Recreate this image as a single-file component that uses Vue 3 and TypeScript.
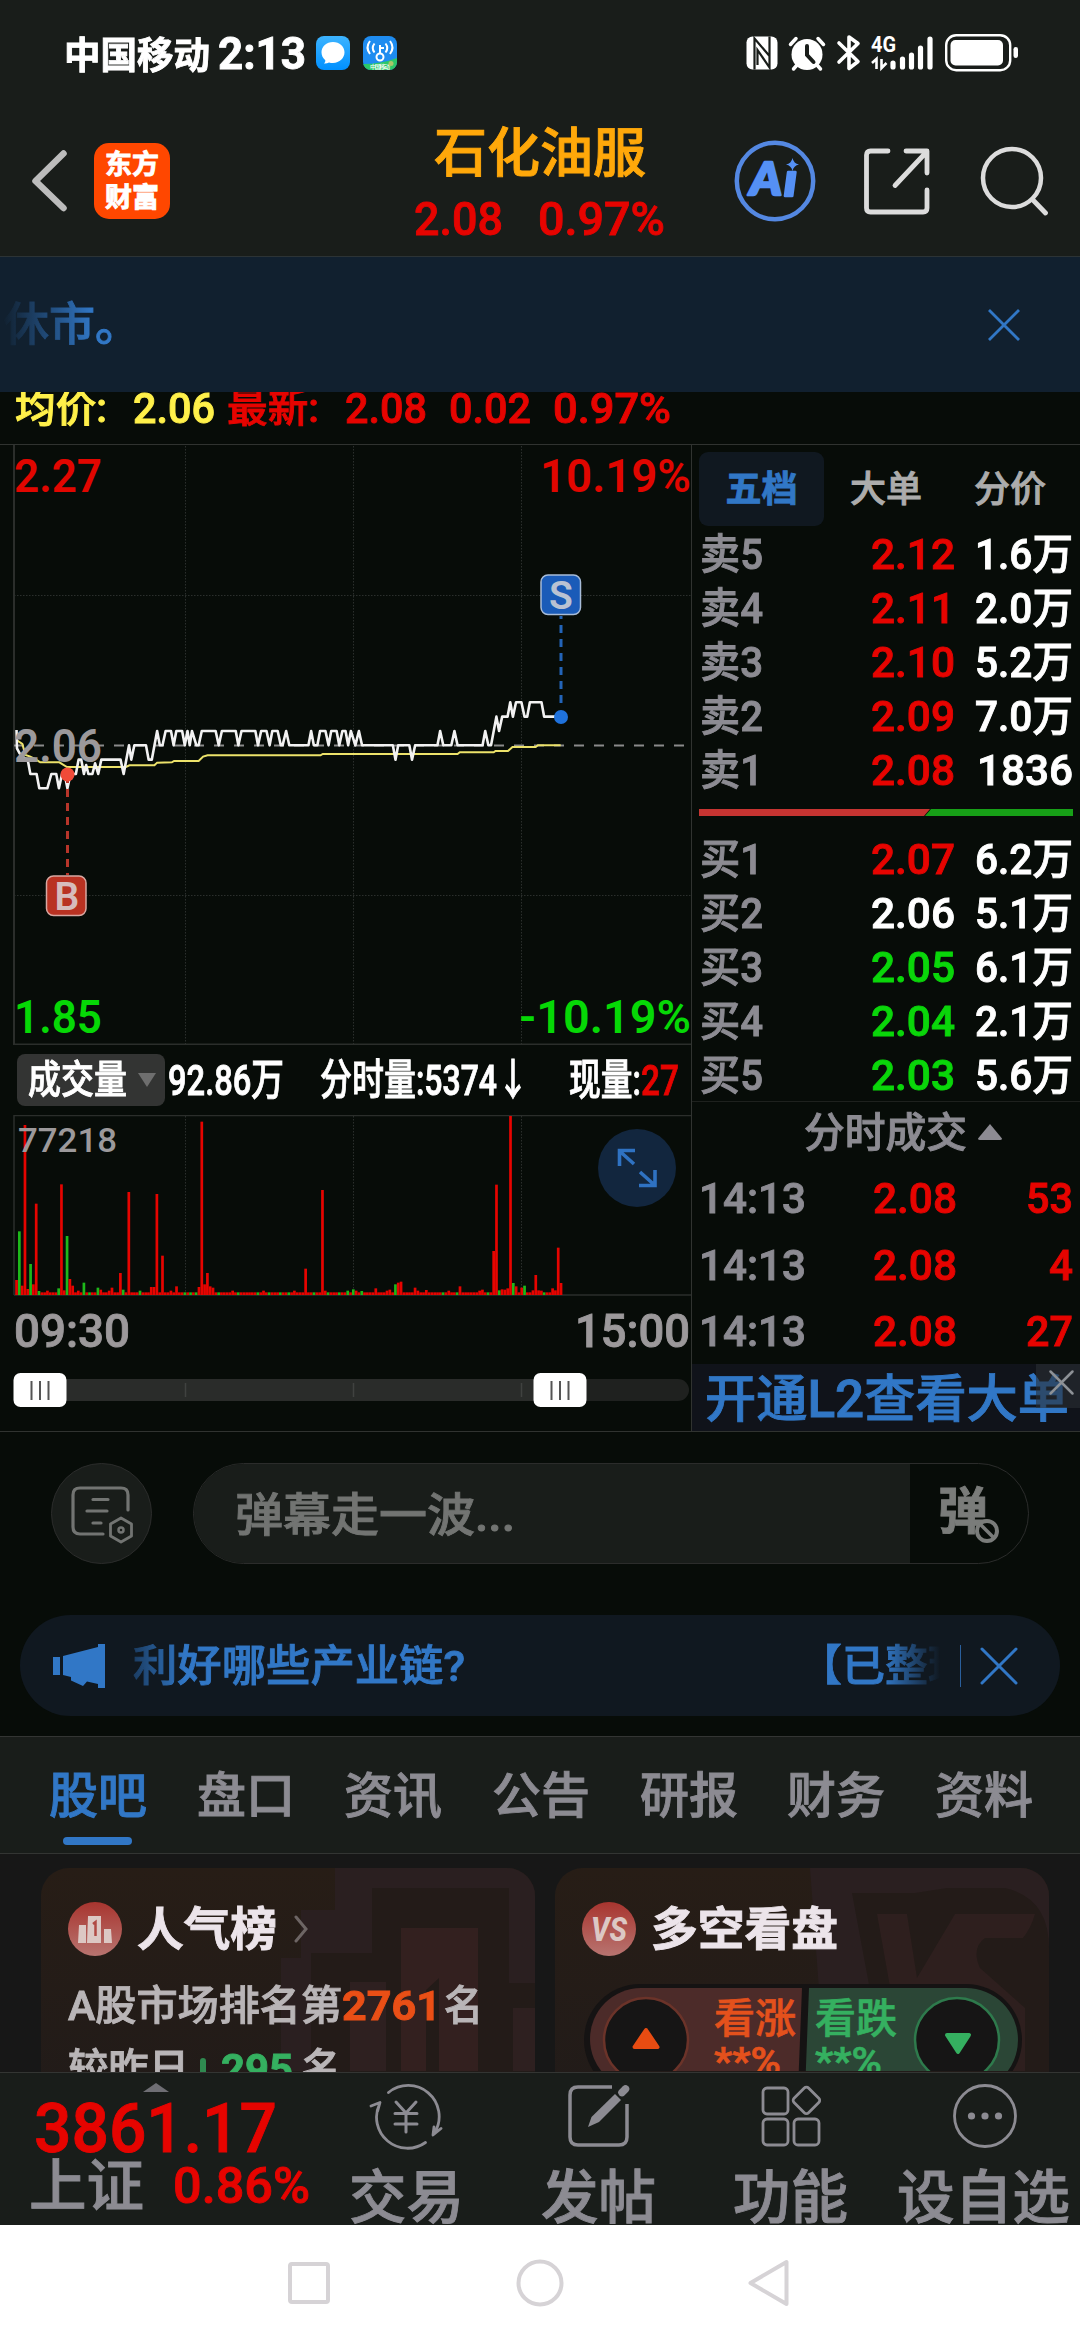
<script setup lang="ts">
import type { Directive } from 'vue'

// Scales a run of text horizontally so that it takes the given width.
const vFit: Directive<HTMLElement, number> = {
  mounted(el, { value }) {
    el.style.display = 'inline-block'
    el.style.whiteSpace = 'nowrap'
    el.style.flexShrink = '0'
    const natural = el.getBoundingClientRect().width
    el.style.transformOrigin = '0 50%'
    el.style.transform = `scaleX(${value / natural})`
    el.style.marginRight = `${value - natural}px`
  },
}

interface Level { name: string; price: string; qty: string; tone: string; w: number }
const asks: Level[] = [
  { name: '卖5', price: '2.12', qty: '1.6万', tone: 'up', w: 98 },
  { name: '卖4', price: '2.11', qty: '2.0万', tone: 'up', w: 98 },
  { name: '卖3', price: '2.10', qty: '5.2万', tone: 'up', w: 98 },
  { name: '卖2', price: '2.09', qty: '7.0万', tone: 'up', w: 98 },
  { name: '卖1', price: '2.08', qty: '1836', tone: 'up', w: 96 },
]
const bids: Level[] = [
  { name: '买1', price: '2.07', qty: '6.2万', tone: 'up', w: 98 },
  { name: '买2', price: '2.06', qty: '5.1万', tone: 'flat', w: 98 },
  { name: '买3', price: '2.05', qty: '6.1万', tone: 'down', w: 98 },
  { name: '买4', price: '2.04', qty: '2.1万', tone: 'down', w: 98 },
  { name: '买5', price: '2.03', qty: '5.6万', tone: 'down', w: 98 },
]
const trades = [
  { time: '14:13', price: '2.08', qty: '53', w: 47 },
  { time: '14:13', price: '2.08', qty: '4', w: 24 },
  { time: '14:13', price: '2.08', qty: '27', w: 47 },
]
const tabs = ['股吧', '盘口', '资讯', '公告', '研报', '财务', '资料']

const pricePath =
  'M37,570 38,625 44,640 55,655 62,659 68,702 82,702 88,745 106,745 115,702 126,702 132,745 139,702 145,702 151,745 158,702 170,702 176,659 182,659 188,702 193,675 198,702 207,702 213,670 220,702 227,659 270,659 277,702 289,616 294,659 301,616 327,616 333,659 340,659 352,573 358,616 364,616 371,573 383,573 389,616 395,573 408,573 414,616 420,573 425,616 430,573 440,616 445,616 452,573 483,573 490,616 497,573 528,573 534,616 541,573 572,573 578,616 585,573 597,573 604,616 610,573 622,573 629,616 633,616 641,573 648,616 691,616 697,573 703,616 711,616 717,573 729,573 736,616 742,573 754,573 760,616 767,573 774,573 780,616 786,573 796,616 804,573 811,616 880,616 886,659 892,616 917,616 923,659 930,616 980,616 986,573 993,616 1011,616 1018,573 1025,616 1081,616 1087,573 1094,616 1100,616 1112,530 1118,573 1125,530 1137,530 1143,487 1149,530 1156,487 1168,487 1175,530 1181,530 1187,487 1213,487 1219,530 1256,530'
const averagePath =
  'M37,600 50,612 57,645 68,650 80,658 90,667 133,667 150,681 282,681 290,676 346,676 352,668 385,667 390,663 445,663 455,650 465,646 718,646 723,642 1025,642 1030,637 1106,637 1110,633 1138,633 1148,621 1200,621 1205,616 1256,616'

interface Bar { i: number; h: number; c: string }
const RED = '#e60400'
const GREEN = '#1db91a'
const peaks: Record<number, [number, string]> = {
  0: [45, RED], 1: [191, GREEN], 2: [28, RED], 3: [510, RED], 4: [18, RED], 5: [93, GREEN], 6: [32, RED], 7: [274, RED], 8: [12, GREEN],
  15: [20, GREEN], 16: [332, RED], 17: [14, RED], 18: [177, GREEN], 19: [48, RED], 20: [28, RED], 24: [37, GREEN], 29: [22, GREEN], 30: [16, RED],
  34: [22, RED], 37: [66, RED], 38: [16, GREEN], 40: [309, RED], 48: [24, RED], 49: [24, RED], 50: [303, RED], 52: [118, RED], 57: [26, RED],
  65: [24, RED], 66: [520, RED], 67: [32, RED], 68: [66, RED], 69: [26, RED], 70: [22, RED], 77: [13, RED], 103: [79, RED], 109: [315, RED],
  118: [13, GREEN], 120: [17, GREEN], 123: [12, GREEN], 128: [20, RED], 133: [16, RED], 135: [32, GREEN], 136: [37, RED], 137: [40, RED],
  142: [22, RED], 146: [15, RED], 158: [26, RED], 166: [16, RED], 170: [132, RED], 171: [331, RED], 172: [14, GREEN], 173: [17, RED],
  174: [16, RED], 175: [20, RED], 176: [537, RED], 177: [36, GREEN], 178: [26, RED], 180: [22, RED], 181: [28, GREEN], 184: [14, RED],
  185: [60, RED], 186: [14, RED], 191: [20, RED], 192: [14, RED], 193: [142, RED], 194: [36, RED],
}
const quietGreens = [26, 44, 60, 62, 64, 72, 79, 86, 90, 94, 97, 106, 111, 115, 152, 157, 168, 188]
const bars: Bar[] = Array.from({ length: 195 }, (_, i) => {
  const p = peaks[i]
  return p
    ? { i, h: p[0], c: p[1] }
    : { i, h: (i * 7) % 11 === 0 ? 13 : 8, c: quietGreens.includes(i) ? GREEN : RED }
})
</script>

<template>
  <div class="screen">
    <div class="status">
      <span v-fit="146" class="carrier">中国移动</span>
      <span v-fit="88" class="clock">2:13</span>
      <svg class="app1" width="34" height="34" viewBox="0 0 34 34">
        <defs>
          <linearGradient id="msg" x1="0" y1="0" x2="0" y2="1"><stop offset="0" stop-color="#3db4ff" /><stop offset="1" stop-color="#0090ff" /></linearGradient>
        </defs>
        <rect width="34" height="34" rx="8" fill="url(#msg)" />
        <path d="M17 6c6.500 0 11.500 4.500 11.500 10.300S23.500 27 17 27c-1.500 0-2.800-.2-4-.6-1.400.9-3.200 1.300-5 1.100 1-.9 1.400-2 1.300-3.300C6.900 22.300 5.500 19.500 5.500 16.300 5.500 10.500 10.500 6 17 6z" fill="#fff" />
      </svg>
      <svg class="app2" width="34" height="34" viewBox="0 0 34 34">
        <defs><clipPath id="wf"><rect width="34" height="34" rx="8" /></clipPath></defs>
        <g clip-path="url(#wf)">
          <rect width="34" height="34" fill="#1e8cf0" />
          <path d="M0 28Q18 28 34 22V34H0z" fill="#2cc768" />
        </g>
        <g fill="none" stroke="#fff" stroke-width="2">
          <path d="M7 5q-5 6.500 0 13M11.500 7.500q-3.500 4.500 0 9M27 5q5 6.500 0 13M22.500 7.500q3.500 4.500 0 9" />
          <circle cx="17" cy="21" r="3.500" /><path d="M17 17.500V9M17 12h4" />
        </g>
        <text x="7" y="32.500" font-size="6" fill="#fff" textLength="20">中国移动</text>
        <circle cx="28" cy="27.500" r="2.500" fill="#a9c66a" />
      </svg>
      <div class="spacer"></div>
      <svg width="275" height="40" viewBox="745 34 275 40">
        <rect x="746.500" y="37.500" width="31" height="33" rx="6" fill="#fff" />
        <path d="M754.500 70.500V39.500L769.500 57V41M769.500 37.500V68.500L757.500 51V66" fill="none" stroke="#191d1a" stroke-width="2.200" />
        <circle cx="807" cy="55.500" r="15.500" fill="#fff" />
        <path d="M790.500 45.500l5.500-6M823.500 45.500l-5.500-6M797 66l-3.500 4M817 66l3.500 4" stroke="#fff" stroke-width="3.500" stroke-linecap="round" />
        <path d="M807 47v9l6.500 7" fill="none" stroke="#191d1a" stroke-width="4" stroke-linecap="round" />
        <path d="M839 44l19 18.500-9 7V38l9 6.500-19 18.500" fill="none" stroke="#fff" stroke-width="3.600" stroke-linecap="round" stroke-linejoin="round" />
        <text x="871" y="53" font-size="22" font-weight="700" fill="#fff" textLength="25" lengthAdjust="spacingAndGlyphs">4G</text>
        <path d="M872 64l4.500-4V70M881.500 60v9l5-5" fill="none" stroke="#fff" stroke-width="2.600" />
        <path d="M893 64v4M902.500 60v8M911.500 56v12M920.500 49v19M930 40v28" stroke="#fff" stroke-width="5.200" stroke-linecap="round" />
        <rect x="946.200" y="36.200" width="64" height="35" rx="10" fill="none" stroke="#fff" stroke-width="2.400" />
        <rect x="950.500" y="41" width="52.500" height="25.500" rx="5" fill="#fff" />
        <rect x="1013.500" y="48" width="4.500" height="11" rx="2.200" fill="#fff" />
      </svg>
    </div>

    <header class="header">
      <svg class="back" width="36" height="62" viewBox="0 0 36 62"><path d="M32.500 3.500L4.500 31l28 27" fill="none" stroke="#bcbcbc" stroke-width="6.500" stroke-linecap="round" stroke-linejoin="round" /></svg>
      <div class="brand"><span>东方</span><span>财富</span></div>
      <div class="title">
        <div class="name"><span v-fit="212">石化油服</span></div>
        <div class="quote up"><span v-fit="89">2.08</span><span v-fit="127">0.97%</span></div>
      </div>
      <div class="tools">
        <svg width="84" height="84" viewBox="0 0 84 84">
          <circle cx="42" cy="42" r="38.200" fill="none" stroke="#5488e2" stroke-width="4.500" />
          <g fill="#5590f5" stroke="#5590f5" stroke-width="2.500" stroke-linejoin="round" font-weight="900" font-style="italic" class="lato">
            <text x="17" y="56" font-size="46" textLength="32" lengthAdjust="spacingAndGlyphs">A</text>
            <text x="51" y="57" font-size="46" textLength="13" lengthAdjust="spacingAndGlyphs">ı</text>
          </g>
          <path d="M59.500 19q1.200 5.500 6.500 6.500-5.300 1-6.500 6.500-1.200-5.500-6.500-6.500 5.300-1 6.500-6.500z" fill="#5590f5" />
        </svg>
        <svg width="66" height="67" viewBox="0 0 66 67">
          <path d="M24 3H6.500Q2.500 3 2.500 7V60q0 4 4 4H59q4 0 4-4V42M42 3H63V25M62 4.500L31 37.500" fill="none" stroke="#dcdcdc" stroke-width="4.800" stroke-linecap="round" stroke-linejoin="round" />
        </svg>
        <svg width="70" height="70" viewBox="0 0 70 70">
          <circle cx="32" cy="32" r="29" fill="none" stroke="#dcdcdc" stroke-width="4.500" /><path d="M52.500 53.500L65.500 67" stroke="#dcdcdc" stroke-width="4.800" stroke-linecap="round" />
        </svg>
      </div>
    </header>

    <div class="banner">
      <span class="fade">休市。</span>
      <svg width="34" height="34" viewBox="0 0 34 34"><path d="M2 2l30 30M32 2L2 32" stroke="#3177c6" stroke-width="2.800" /></svg>
    </div>

    <div class="info">
      <span v-fit="92" class="yel cjk">均价:</span><span v-fit="82" class="yel n1">2.06</span>
      <span v-fit="92" class="up n2 cjk">最新:</span><span v-fit="82" class="up n3">2.08</span>
      <span v-fit="82" class="up n4">0.02</span><span v-fit="118" class="up n4">0.97%</span>
    </div>

    <div class="market">
      <div class="left">
        <svg width="691" height="600" viewBox="0 445 691 600">
          <g stroke="#2b2f2c" fill="none">
            <path d="M14 444V1044.500H691" stroke="#2b2e2b" stroke-width="2" />
            <path d="M185.500 446V1044M353.500 446V1044M521.500 446V1044M14 595.500H691M14 895.500H691" stroke-dasharray="1.500 1.500" />
          </g>
          <path d="M14 745.500H690" stroke="#8a8a8a" stroke-width="2" stroke-dasharray="10 10" />
          <g transform="translate(0 540) scale(.4464 .3333)" fill="none">
            <path :d="averagePath" stroke="#ece26a" stroke-width="2" vector-effect="non-scaling-stroke" />
            <path :d="pricePath" stroke="#f2f2f2" stroke-width="2.600" vector-effect="non-scaling-stroke" stroke-linejoin="round" />
          </g>
          <path d="M67.500 775V875" stroke="#b8352a" stroke-width="3" stroke-dasharray="8 6" stroke-dashoffset="-14" />
          <path d="M561 616V706" stroke="#2364b8" stroke-width="3" stroke-dasharray="8 6" stroke-dashoffset="5" />
          <circle cx="67.500" cy="774.500" r="7" fill="#f04a38" />
          <circle cx="561" cy="717" r="7" fill="#1f72dc" />
          <rect x="541" y="575" width="39.500" height="39.500" rx="7" fill="#1a5bb8" stroke="#a8bcd8" stroke-width="1.500" />
          <rect x="46.500" y="876" width="39.500" height="39.500" rx="7" fill="#b93222" stroke="#d8a8a2" stroke-width="1.500" />
          <g font-weight="600" font-size="39" text-anchor="middle" fill="#b9c2d2">
            <text x="561" y="609">S</text><text x="67" y="910" fill="#d6bcbc">B</text>
          </g>
          <g font-weight="600" font-size="46">
            <text x="14" y="492" fill="#e10600" textLength="88" lengthAdjust="spacingAndGlyphs">2.27</text>
            <text x="540" y="492" fill="#e10600" textLength="151" lengthAdjust="spacingAndGlyphs">10.19%</text>
            <text x="14" y="762" fill="#9c999b" textLength="88" lengthAdjust="spacingAndGlyphs">2.06</text>
            <text x="14" y="1033" fill="#06d806" textLength="88" lengthAdjust="spacingAndGlyphs">1.85</text>
            <text x="519" y="1033" fill="#06d806" textLength="172" lengthAdjust="spacingAndGlyphs">-10.19%</text>
          </g>
        </svg>

        <div class="volrow">
          <div class="pill"><span v-fit="99">成交量</span><i></i></div>
          <span v-fit="116" class="v1">92.86万</span>
          <span v-fit="209" class="v2">分时量:5374↓</span>
          <span v-fit="72" class="v3">现量:</span><span v-fit="38" class="up">27</span>
        </div>

        <svg class="vol" width="691" height="181" viewBox="0 1115 691 181">
          <path d="M14 1115.500H691M14 1115V1295M14 1295H691" stroke="#2b2e2b" stroke-width="1.500" fill="none" />
          <path d="M185.500 1116V1294M353.500 1116V1294M521.500 1116V1294" stroke="#2b2f2c" stroke-dasharray="1.500 1.500" />
          <rect v-for="b in bars" :key="b.i" :x="15.2 + b.i * 2.8066" :y="1295 - b.h / 3" width="2.7" :height="b.h / 3" :fill="b.c" />
          <text x="18" y="1152" font-size="34" font-weight="500" fill="#9c999b" textLength="99" lengthAdjust="spacingAndGlyphs">77218</text>
          <circle cx="637" cy="1168" r="39" fill="#12263e" />
          <path d="M634 1164L619.500 1151M635 1150.500H619.500V1166M640 1172L654.500 1185M639 1185.500H655V1170" fill="none" stroke="#2f72c2" stroke-width="3.600" />
        </svg>

        <div class="times"><span v-fit="116">09:30</span><span v-fit="115">15:00</span></div>

        <svg class="slider" width="691" height="40" viewBox="0 1370 691 40">
          <rect x="20" y="1379" width="669" height="22" rx="11" fill="#1f211f" />
          <rect x="20" y="1379" width="540" height="22" fill="#2a2c2a" />
          <path d="M185.500 1383v14M353.500 1383v14M521.500 1383v14" stroke="#404240" stroke-width="1.500" />
          <g fill="#fff"><rect x="13.500" y="1373" width="53" height="34" rx="7" /><rect x="533.500" y="1373" width="53" height="34" rx="7" /></g>
          <path d="M31.500 1381v19M40 1381v19M48.500 1381v19M551.500 1381v19M560 1381v19M568.500 1381v19" stroke="#555" stroke-width="2" />
        </svg>
      </div>

      <div class="right">
        <div class="seg"><b>五档</b><span>大单</span><span>分价</span></div>
        <div v-for="l in asks" :key="l.name" class="lvl">
          <span v-fit="63" class="lab">{{ l.name }}</span><span v-fit="84" :class="['pr', l.tone]">{{ l.price }}</span><div class="qt"><span v-fit="l.w">{{ l.qty }}</span></div>
        </div>
        <svg class="ratio" width="374" height="7" viewBox="0 0 374 7"><path d="M0 0H231L225 7H0z" fill="#c63431" /><path d="M232 0H374V7H226z" fill="#17a017" /></svg>
        <div v-for="l in bids" :key="l.name" class="lvl">
          <span v-fit="63" class="lab">{{ l.name }}</span><span v-fit="84" :class="['pr', l.tone]">{{ l.price }}</span><div class="qt"><span v-fit="l.w">{{ l.qty }}</span></div>
        </div>
        <div class="thead"><span v-fit="163">分时成交</span><svg width="24" height="16" viewBox="0 0 24 16"><path d="M12 0L24 14.500Q24 16 22 16H2Q0 16 0 14.500z" fill="#8c8b92" /></svg></div>
        <div v-for="(t, i) in trades" :key="i" class="trade">
          <span v-fit="107" class="lab">{{ t.time }}</span><span v-fit="84" class="pr up">{{ t.price }}</span><div class="qt up"><span v-fit="t.w">{{ t.qty }}</span></div>
        </div>
        <div class="l2">
          <span v-fit="364">开通L2查看大单</span>
          <svg class="l2x" width="44" height="44" viewBox="0 0 44 44"><rect width="44" height="44" fill="#2a2f33" opacity=".6" /><path d="M14.500 7.500l22 22M36.500 7.500l-22 22" stroke="#8d9196" stroke-width="2.500" stroke-linecap="round" /></svg>
        </div>
      </div>
    </div>

    <div class="chat">
      <div class="round">
        <svg width="62" height="58" viewBox="0 0 62 58" fill="none" stroke="#727472" stroke-width="3.200" stroke-linecap="round">
          <path d="M57 24V9Q57 2 50 2H9Q2 2 2 9V41Q2 48 9 48H32M22 13.500H37M16 25H36M22 37H30" />
          <path d="M50 32l10.500 6v12L50 56l-10.500-6V38z" stroke-linejoin="round" stroke-width="2.800" /><circle cx="50" cy="44" r="2.500" stroke-width="2.500" />
        </svg>
      </div>
      <div class="input">
        <div class="ph"><span v-fit="280">弹幕走一波...</span></div>
        <div class="dm">
          <span>弹</span>
          <svg width="26" height="26" viewBox="0 0 26 26"><circle cx="13" cy="13" r="10" fill="#070c08" stroke="#7a7c7a" stroke-width="4" /><path d="M7 7l12 12" stroke="#7a7c7a" stroke-width="3.500" /></svg>
        </div>
      </div>
    </div>

    <div class="notice">
      <svg width="54" height="46" viewBox="0 0 54 46" fill="#3177c6"><rect y="14" width="7" height="18" /><path d="M10 13L45 4V1h7V45h-7V41L34 38.500 30 43 18 37.500V34L10 32z" /></svg>
      <span v-fit="332" class="nt1">利好哪些产业链?</span>
      <div class="nt2">【已整理</div>
      <i class="bar"></i>
      <svg width="38" height="38" viewBox="0 0 38 38"><path d="M2 2l34 34M36 2L2 36" stroke="#3177c6" stroke-width="3" stroke-linecap="round" /></svg>
    </div>

    <nav class="tabs">
      <div v-for="(t, i) in tabs" :key="t" :class="['tab', { on: i === 0 }]"><span v-fit="98">{{ t }}</span><i v-if="i === 0"></i></div>
    </nav>

    <div class="cards">
      <section class="card">
        <svg class="mark" width="494" height="203" viewBox="0 0 494 203">
          <path d="M294 0H494V203H240V90H260V42H294z" fill="#2a1f20" />
          <path d="M331 20H468V115H494V203H270V85H331z" fill="#231b18" />
          <path d="M360 60H437V203H398V110L385 122V203H360z" fill="#33201f" /><path d="M309 114H345V203H309zM472 140H494V203H472z" fill="#2e2020" />
        </svg>
        <div class="chead">
          <svg width="54" height="54" viewBox="0 0 54 54">
            <defs><linearGradient id="rd" x1="0" y1="0" x2="0" y2="1"><stop offset="0" stop-color="#a8352f" /><stop offset="1" stop-color="#b87470" /></linearGradient></defs>
            <circle cx="27" cy="27" r="27" fill="url(#rd)" />
            <path d="M11 23h7V41h-8zM20 14H33V41H19zM36 27h7l1 14H36z" fill="#dcc8c4" /><path d="M25 22l2.500-2V34" fill="none" stroke="#b04a44" stroke-width="2.500" />
          </svg>
          <b v-fit="140">人气榜</b>
          <svg class="chev" width="16" height="28" viewBox="0 0 16 28"><path d="M3 2l10 12L3 26" fill="none" stroke="#6d6564" stroke-width="3" stroke-linecap="round" /></svg>
        </div>
        <div class="line l1"><span v-fit="274">A股市场排名第</span><b v-fit="99" class="org">2761</b><span v-fit="39" class="gap">名</span></div>
        <div class="line l2b"><span v-fit="121">较昨日</span><i class="stem"></i><b v-fit="72" class="grn">295</b><span v-fit="39" class="gap2">名</span></div>
      </section>

      <section class="card">
        <svg class="mark" width="494" height="203" viewBox="0 0 494 203">
          <path d="M255 0H494V203H270z" fill="#2a1f20" />
          <path d="M297 25H360L392 20H450Q494 30 494 80V203H330z" fill="#231b18" />
          <path d="M322 46H352L362 110 400 46H480Q476 60 468 70H430Q416 80 425 100L470 140V203H350z" fill="#2e1f1e" />
        </svg>
        <div class="chead">
          <svg width="54" height="54" viewBox="0 0 54 54">
            <circle cx="27" cy="27" r="27" fill="url(#rd)" />
            <text x="9" y="39" font-size="34" font-weight="800" font-style="italic" fill="#dcc8c4" textLength="36" lengthAdjust="spacingAndGlyphs">VS</text>
          </svg>
          <b v-fit="187">多空看盘</b>
        </div>
        <svg class="vote" width="440" height="88" viewBox="583 1983 440 88">
          <rect x="584" y="1984" width="438" height="112" rx="56" fill="#151313" />
          <path d="M641 1988H802L798 2090H641A51 51 0 0 1 641 1988z" fill="#4c2b29" />
          <path d="M809 1988H966A51 51 0 0 1 966 2092H805z" fill="#2b4636" />
          <circle cx="646" cy="2040" r="42" fill="#161515" stroke="#6b3329" stroke-width="2.500" /><circle cx="957" cy="2040" r="42" fill="#161515" stroke="#2e7a4c" stroke-width="2.500" />
          <path d="M646 2030L657.500 2047H634.500z" fill="#e84c12" stroke="#e84c12" stroke-width="4" stroke-linejoin="round" />
          <path d="M958 2052L969 2035H947z" fill="#35b060" stroke="#35b060" stroke-width="4" stroke-linejoin="round" />
          <g font-size="41" fill="#e4511c" stroke="#e4511c" stroke-width=".7">
            <text x="714" y="2033" textLength="82" lengthAdjust="spacingAndGlyphs">看涨</text><text x="714" y="2075" font-size="38" textLength="67" lengthAdjust="spacingAndGlyphs">**%</text>
          </g>
          <g font-size="41" fill="#35b060" stroke="#35b060" stroke-width=".7">
            <text x="815" y="2033" textLength="82" lengthAdjust="spacingAndGlyphs">看跌</text><text x="815" y="2075" font-size="38" textLength="67" lengthAdjust="spacingAndGlyphs">**%</text>
          </g>
        </svg>
      </section>
    </div>

    <footer class="dock">
      <div class="index">
        <svg width="26" height="9" viewBox="0 0 26 9"><path d="M13 0L26 9H0z" fill="#6f6e74" /></svg>
        <div class="big up"><span v-fit="243">3861.17</span></div>
        <div class="sub"><span v-fit="115" class="sz">上证</span><span v-fit="137" class="pc up">0.86%</span></div>
      </div>
      <div class="act a1">
        <svg width="74" height="68" viewBox="369 2081 74 68" fill="none" stroke="#8c8b92" stroke-width="2.800" stroke-linecap="round" stroke-linejoin="round">
          <path d="M388.500 2091.500A31 31 0 0 1 435 2131M441 2127.500L433 2134 434 2126M371 2105l9-3.500-2.500 9M379.500 2103A31 31 0 0 0 425.500 2141.500" />
          <path d="M396 2101l10 11 10-11M406 2112v19M395 2112.500h22M395 2123h22" stroke-width="3" />
        </svg>
        <span v-fit="113">交易</span>
      </div>
      <div class="act a2">
        <svg width="62" height="64" viewBox="0 0 62 64">
          <path d="M44 3H10Q2 3 2 11V53q0 8 8 8H51q8 0 8-8V20" fill="none" stroke="#8c8b92" stroke-width="3.500" /><path d="M20 43l3.500-10L47 10l6 6L31 38z" fill="#8c8b92" /><path d="M54 8.500l3.500-3.500" stroke="#8c8b92" stroke-width="7.500" stroke-linecap="round" />
        </svg>
        <span v-fit="115">发帖</span>
      </div>
      <div class="act a3">
        <svg width="60" height="62" viewBox="0 0 60 62" fill="none" stroke="#8c8b92" stroke-width="2.800">
          <rect x="2" y="3" width="25" height="26" rx="4" /><rect x="2" y="34" width="25" height="26" rx="4" /><rect x="33" y="34" width="25" height="26" rx="4" /><rect x="35" y="5" width="20.500" height="20.500" rx="3" transform="rotate(45 45.200 15.500)" />
        </svg>
        <span v-fit="115">功能</span>
      </div>
      <div class="act a4">
        <svg width="66" height="66" viewBox="0 0 66 66"><circle cx="33" cy="33" r="30.500" fill="none" stroke="#8c8b92" stroke-width="2.800" /><g fill="#8c8b92"><circle cx="19.500" cy="33" r="3.600" /><circle cx="33" cy="33" r="3.600" /><circle cx="46.500" cy="33" r="3.600" /></g></svg>
        <span v-fit="174">设自选</span>
      </div>
    </footer>

    <div class="sysnav">
      <svg width="520" height="50" viewBox="280 2257 520 50" fill="none" stroke="#d6d3d6" stroke-width="4">
        <rect x="290" y="2263" width="38" height="38" rx="2" /><circle cx="540" cy="2282" r="21.500" /><path d="M786.500 2261V2303L750.500 2282z" stroke-linejoin="round" />
      </svg>
    </div>
  </div>
</template>

<style>
body {
  background: #191d1a;
}
</style>

<style scoped>
.screen {
  width: 1080px;
  height: 2340px;
  overflow: hidden;
  display: flex;
  flex-direction: column;
  background: #070c08;
  font-family: Roboto, 'Noto Sans CJK SC', sans-serif;
  font-weight: 500;
  -webkit-text-stroke: 0.9px;
}
.screen > * { flex-shrink: 0; }
svg { display: block; flex-shrink: 0; }
.lato { font-family: Lato, sans-serif; }
.up { color: #e60400; }
.flat { color: #fff; }
.down { color: #0ad60a; }
.yel { color: #fff04a; }

.status { height: 106px; display: flex; align-items: center; padding: 0 60px 0 64px; background: #191d1a; color: #fff; box-sizing: border-box; }
.carrier { font-size: 37px; font-weight: 700; }
.clock { font-size: 45px; font-weight: 700; margin-left: 8px; line-height: 46px; padding-top: 2px; }
.app1 { margin-left: 10px; }
.app2 { margin-left: 13px; }
.spacer { flex: 1; }

.header { height: 151px; display: flex; background: #191d1a; border-bottom: 1px solid #2c3335; box-sizing: border-box; align-items: flex-start; }
.back { margin: 44px 0 0 31px; }
.brand { margin: 37px 0 0 27px; width: 76px; height: 76px; border-radius: 15px; background: #ff4700; color: #fff; font-weight: 700; font-size: 27px; line-height: 33px; display: flex; flex-direction: column; align-items: center; padding-top: 6px; box-sizing: border-box; }
.title { flex: 1; }
.name { margin: 17px 0 0 264px; font-size: 53px; line-height: 62px; color: #ffa80a; }
.quote { margin: 4px 0 0 244px; font-size: 46px; line-height: 60px; display: flex; gap: 35px; }
.tools { display: flex; align-items: center; padding: 33px 30px 0 0; }
.tools svg + svg { margin-left: 47px; }
.tools svg + svg + svg { margin-left: 50px; }

.banner { height: 135px; background: #11202f; display: flex; justify-content: space-between; align-items: center; padding: 0 59px 0 3px; }
.fade { font-size: 46px; line-height: 60px; margin-top: -2px; color: transparent; background: linear-gradient(90deg, #11202f 0, #3177c6 90px); background-clip: text; -webkit-background-clip: text; }

.info { height: 52px; overflow: hidden; display: flex; font-size: 42px; line-height: 34px; padding-left: 15px; }
.info .cjk { font-size: 40px; }
.n1 { margin-left: 26px; }
.n2 { margin-left: 12px; }
.n3 { margin-left: 26px; }
.n4 { margin-left: 22px; }

.market { height: 988px; display: flex; border-top: 1px solid #303330; border-bottom: 1px solid #303330; box-sizing: border-box; }
.left { width: 691px; border-right: 1px solid #303330; }
.volrow { height: 70px; display: flex; align-items: center; color: #fff; font-size: 43px; line-height: 50px; padding-left: 17px; box-sizing: border-box; }
.pill { width: 148px; height: 52px; border-radius: 8px; background: #333433; display: flex; align-items: center; font-size: 39px; padding-left: 11px; box-sizing: border-box; line-height: 44px; }
.pill i { margin-left: 11px; border: 9px solid transparent; border-top: 14px solid #6e6e6e; border-bottom: 0; }
.v1 { margin-left: 3px; }
.v2 { margin-left: 36px; }
.v3 { margin-left: 40px; }
.times { display: flex; justify-content: space-between; padding: 0 1px 0 14px; height: 74px; line-height: 70px; font-size: 46px; color: #9c999b; }

.right { flex: 1; display: flex; flex-direction: column; }
.right > * { flex-shrink: 0; }
.seg { display: flex; height: 74px; margin: 7px 0 1px 7px; line-height: 76px; font-size: 36px; color: #acacac; }
.seg b { width: 125px; text-align: center; background: #101820; color: #3177c6; border-radius: 9px; }
.seg span { margin-left: 26px; width: 73px; }
.seg span + span { margin-left: 51px; }
.lvl, .trade { display: flex; height: 53.900px; line-height: 56px; font-size: 42.500px; padding: 0 7px 0 8px; color: #fff; }
.lvl .lab, .trade .lab { color: #8c8b92; }
.lvl .pr { margin-left: 108px; }
.qt { margin-left: auto; display: flex; }
.ratio { margin: 13px 0 16px 7px; }
.thead { height: 62px; display: flex; align-items: center; border-top: 1px solid #1e211e; margin-top: -1px; padding-left: 112px; font-size: 41px; line-height: 60px; color: #8c8b92; }
.thead svg { margin: -2px 0 0 11px; }
.trade { height: 66.700px; line-height: 70px; }
.trade .up { color: #e60400; }
.trade .lab { margin-left: -1px; }
.trade .pr { margin-left: 67px; }
.l2 { position: relative; height: 67px; margin-top: auto; background: #10131a; color: #3177c6; font-size: 51px; line-height: 71px; padding-left: 13px; }
.l2x { position: absolute; right: 0; top: 0; }

.chat { display: flex; padding: 31px 0 0 51px; height: 183px; box-sizing: border-box; }
.round { width: 101px; height: 101px; border-radius: 50%; background: #191d1a; border: 1px solid #2b2c2b; box-sizing: border-box; display: flex; align-items: center; justify-content: center; padding-top: 2px; }
.input { margin-left: 41px; width: 836px; height: 101px; border-radius: 51px; border: 1px solid #2b2c2b; box-sizing: border-box; overflow: hidden; display: flex; }
.ph { width: 716px; background: #191d1a; padding-left: 41px; box-sizing: border-box; font-size: 46px; line-height: 102px; color: #727472; }
.dm { flex: 1; position: relative; color: #7a7c7a; font-size: 50px; font-weight: 700; line-height: 96px; padding-left: 28px; }
.dm svg { position: absolute; left: 64px; top: 54px; }

.notice { margin: 0 20px; height: 101px; border-radius: 51px; background: #101820; color: #3177c6; display: flex; align-items: center; font-size: 43px; line-height: 100px; padding-left: 33px; }
.nt1 { margin-left: 26px; background: linear-gradient(90deg, #1b3d63 0, #3177c6 50px); color: transparent; background-clip: text; -webkit-background-clip: text; }
.nt2 { margin-left: 334px; width: 141px; overflow: hidden; white-space: nowrap; background: linear-gradient(90deg, #3177c6 85px, #101820 141px); color: transparent; background-clip: text; -webkit-background-clip: text; }
.bar { width: 1px; height: 42px; background: #2a5f9c; margin: 0 19px 0 20px; }

.tabs { margin-top: 20px; height: 118px; border-top: 1px solid #333533; border-bottom: 1px solid #333533; box-sizing: border-box; background: #191d1a; display: flex; justify-content: space-between; padding: 0 47px 0 49px; font-size: 49px; line-height: 120px; color: #8c8b92; }
.tab { position: relative; height: 116px; }
.tab.on { color: #3177c6; }
.tab i { position: absolute; left: 14px; top: 100px; width: 69px; height: 8px; border-radius: 4px; background: #3177c6; }

.cards { height: 218px; background: #171717; display: flex; gap: 20px; padding: 14px 31px 0 41px; box-sizing: border-box; overflow: hidden; }
.card { width: 494px; height: 240px; flex-shrink: 0; border-radius: 28px; background: linear-gradient(180deg, #271d16, #211b19); overflow: hidden; position: relative; }
.mark { position: absolute; left: 0; top: 0; }
.chead { position: relative; display: flex; align-items: center; padding: 34px 0 0 27px; height: 54px; font-size: 46px; color: #ece4ea; line-height: 54px; }
.chead b { margin-left: 15px; }
.chev { margin-left: 16px; }
.line { position: relative; display: flex; color: #b9b5b7; font-size: 41px; line-height: 60px; padding-left: 27px; }
.l1 { margin-top: 20px; }
.l2b { margin-top: 3px; }
.org { color: #ea4f16; }
.grn { color: #35b060; margin-left: 15px; }
.gap { margin-left: 3px; }
.gap2 { margin-left: 9px; }
.stem { width: 6px; height: 30px; background: #2f8a50; margin: 19px 0 0 11px; border-radius: 3px; }
.vote { position: absolute; left: 28px; top: 115px; }

.dock { height: 153px; background: #191d1a; border-top: 1px solid #333533; box-sizing: border-box; display: flex; overflow: hidden; color: #8c8b92; }
.index { width: 343px; }
.index > svg { margin: 10px 0 0 143px; }
.big { font-size: 69px; line-height: 60px; height: 58px; padding-left: 34px; margin-top: 7px; }
.sub { display: flex; padding-left: 29px; font-size: 57px; line-height: 60px; }
.pc { font-size: 50px; margin-left: 29px; line-height: 58px; }
.act { display: flex; flex-direction: column; font-size: 58px; line-height: 70px; }
.act svg { height: 68px; margin: 9px auto 13px; }
.a1 { width: 114px; margin-left: 6px; }
.a2 { width: 116px; margin-left: 78px; }
.a3 { width: 116px; margin-left: 76px; }
.a4 { width: 175px; margin-left: 48px; }

.sysnav { height: 116px; background: #fff; display: flex; justify-content: center; align-items: center; }
</style>
